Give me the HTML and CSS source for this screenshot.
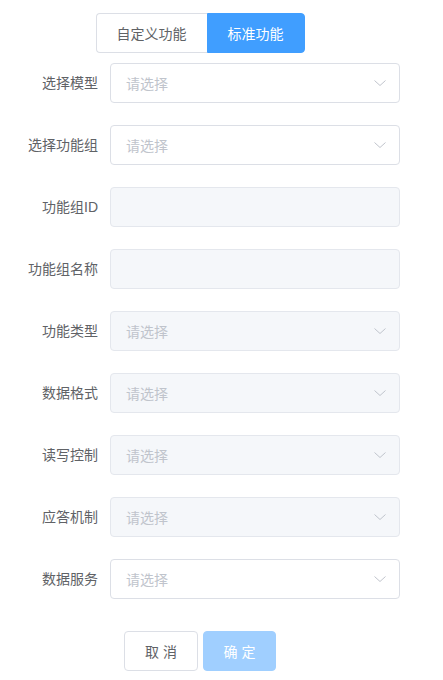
FILE: index.html
```html
<!DOCTYPE html>
<html lang="zh-CN">
<head>
<meta charset="utf-8">
<link rel="stylesheet" href="styles.css">
</head>
<body>
<div class="page">
  <div class="tabs">
    <button class="tab">自定义功能</button>
    <button class="tab tab-active">标准功能</button>
  </div>
  <form class="form">
    <div class="row"><label class="label">选择模型</label><div class="field select"><span class="ph">请选择</span><svg class="arrow" viewBox="0 0 12 6"><path d="M0.5 0.5 L6 5.5 L11.5 0.5"/></svg></div></div>
    <div class="row"><label class="label">选择功能组</label><div class="field select"><span class="ph">请选择</span><svg class="arrow" viewBox="0 0 12 6"><path d="M0.5 0.5 L6 5.5 L11.5 0.5"/></svg></div></div>
    <div class="row"><label class="label">功能组ID</label><div class="field disabled"></div></div>
    <div class="row"><label class="label">功能组名称</label><div class="field disabled"></div></div>
    <div class="row"><label class="label">功能类型</label><div class="field select disabled"><span class="ph">请选择</span><svg class="arrow" viewBox="0 0 12 6"><path d="M0.5 0.5 L6 5.5 L11.5 0.5"/></svg></div></div>
    <div class="row"><label class="label">数据格式</label><div class="field select disabled"><span class="ph">请选择</span><svg class="arrow" viewBox="0 0 12 6"><path d="M0.5 0.5 L6 5.5 L11.5 0.5"/></svg></div></div>
    <div class="row"><label class="label">读写控制</label><div class="field select disabled"><span class="ph">请选择</span><svg class="arrow" viewBox="0 0 12 6"><path d="M0.5 0.5 L6 5.5 L11.5 0.5"/></svg></div></div>
    <div class="row"><label class="label">应答机制</label><div class="field select disabled"><span class="ph">请选择</span><svg class="arrow" viewBox="0 0 12 6"><path d="M0.5 0.5 L6 5.5 L11.5 0.5"/></svg></div></div>
    <div class="row"><label class="label">数据服务</label><div class="field select"><span class="ph">请选择</span><svg class="arrow" viewBox="0 0 12 6"><path d="M0.5 0.5 L6 5.5 L11.5 0.5"/></svg></div></div>
  </form>
  <div class="footer">
    <button class="btn">取 消</button>
    <button class="btn btn-primary">确 定</button>
  </div>
</div>
</body>
</html>
```

FILE: styles.css
```css
* { box-sizing: border-box; }
html, body { margin: 0; padding: 0; background: #fff; }
body {
  font-family: "Liberation Sans", "Noto Sans CJK SC", sans-serif;
  font-size: 14px;
  color: #606266;
}
.page {
  width: 400px;
  padding-top: 13px;
  display: flex;
  flex-direction: column;
}
.tabs {
  display: flex;
  justify-content: center;
  margin-bottom: 10px;
}
.tab {
  font: inherit;
  font-size: 14px;
  height: 40px;
  padding: 0 20px;
  border: 1px solid #dcdfe6;
  background: #fff;
  color: #606266;
  margin: 0;
  cursor: pointer;
}
.tab:first-child { border-radius: 4px 0 0 4px; border-right: 0; }
.tab-active {
  background: #409eff;
  border-color: #409eff;
  color: #fff;
  border-radius: 0 4px 4px 0;
}
.form { margin: 0; }
.row {
  display: flex;
  height: 40px;
  margin-bottom: 22px;
}
.label {
  width: 110px;
  padding-right: 12px;
  text-align: right;
  line-height: 40px;
  color: #606266;
  white-space: nowrap;
}
.field {
  width: 290px;
  height: 40px;
  border: 1px solid #dcdfe6;
  border-radius: 4px;
  background: #fff;
  display: flex;
  align-items: center;
  padding: 0 12px 0 15px;
}
.field.disabled {
  background: #f5f7fa;
  border-color: #e4e7ed;
}
.ph {
  flex: 1;
  color: #c0c4cc;
}
.arrow {
  width: 12px;
  height: 6px;
  margin-right: 1px;
  fill: none;
  stroke: #c0c4cc;
  stroke-width: 1;
}
.footer {
  display: flex;
  justify-content: center;
  gap: 5px;
  padding-top: 10px;
}
.btn {
  font: inherit;
  font-size: 14px;
  height: 40px;
  width: 74px;
  padding: 0;
  border: 1px solid #dcdfe6;
  border-radius: 4px;
  background: #fff;
  color: #606266;
}
.btn-primary {
  background: #a0cfff;
  border-color: #a0cfff;
  color: #fff;
  width: 73px;
}
```
